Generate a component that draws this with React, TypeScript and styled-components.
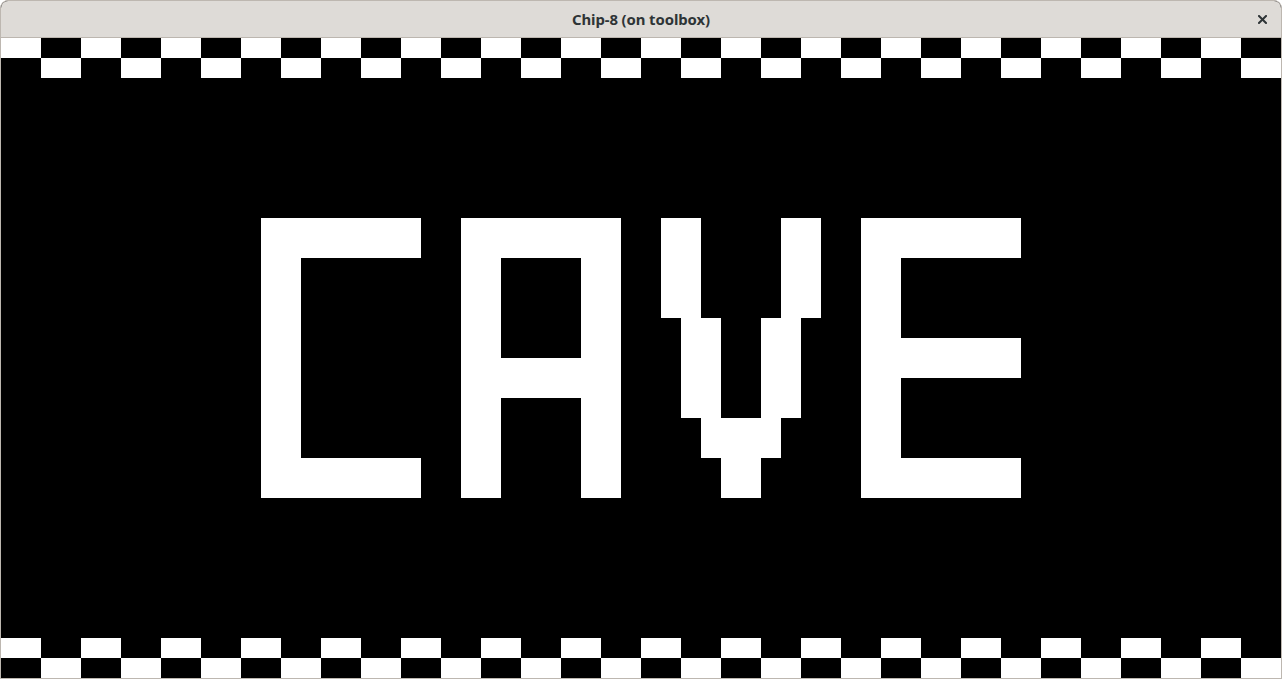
import React from "react";
import styled, { createGlobalStyle } from "styled-components";

const GlobalStyle = createGlobalStyle`
  html, body { margin: 0; padding: 0; background: #ffffff; }
  body { font-family: "Noto Sans", "DejaVu Sans", sans-serif; }
`;

const COLS = 64;
const ROWS = 32;
const SCALE = 20;

function buildScreen(): boolean[][] {
  const g: boolean[][] = Array.from({ length: ROWS }, () => Array(COLS).fill(false));
  const fill = (r0: number, r1: number, c0: number, c1: number) => {
    for (let r = r0; r <= r1; r++) for (let c = c0; c <= c1; c++) g[r][c] = true;
  };
  // checker borders
  for (let c = 0; c < COLS; c++) {
    const even = Math.floor(c / 2) % 2 === 0;
    g[0][c] = even;
    g[1][c] = !even;
    g[30][c] = even;
    g[31][c] = !even;
  }
  // C
  fill(9, 10, 13, 20);
  fill(11, 20, 13, 14);
  fill(21, 22, 13, 20);
  // A
  fill(9, 10, 23, 30);
  fill(11, 22, 23, 24);
  fill(11, 22, 29, 30);
  fill(16, 17, 23, 30);
  // V
  fill(9, 13, 33, 34);
  fill(9, 13, 39, 40);
  fill(14, 18, 34, 35);
  fill(14, 18, 38, 39);
  fill(19, 20, 35, 38);
  fill(21, 22, 36, 37);
  // E
  fill(9, 10, 43, 50);
  fill(11, 22, 43, 44);
  fill(15, 16, 43, 50);
  fill(21, 22, 43, 50);
  return g;
}

const screen = buildScreen();

const Window = styled.div`
  width: 1280px;
  height: 677px;
  border: 1px solid #bdb7b0;
  border-radius: 8px 8px 0 0;
  overflow: hidden;
  display: flex;
  flex-direction: column;
  background: #000;
`;

const TitleBar = styled.div`
  height: 36px;
  flex: 0 0 36px;
  background: #dedbd7;
  border-bottom: 1px solid #bcb6af;
  display: grid;
  grid-template-columns: 1fr auto 1fr;
  align-items: center;
`;

const Title = styled.div`
  grid-column: 2;
  font-family: "Noto Sans", "DejaVu Sans", sans-serif;
  font-weight: 700;
  font-size: 14.9px;
  color: #2e3436;
  letter-spacing: -0.1px;
  margin-top: -1px;
`;

const CloseButton = styled.button`
  grid-column: 3;
  justify-self: end;
  margin-right: 7px;
  width: 24px;
  height: 24px;
  border: none;
  background: transparent;
  padding: 0;
  display: flex;
  align-items: center;
  justify-content: center;
  color: #2e3436;
`;

const Display = styled.div`
  display: grid;
  grid-template-columns: repeat(${COLS}, ${SCALE}px);
  grid-template-rows: repeat(${ROWS}, ${SCALE}px);
  width: ${COLS * SCALE}px;
  height: ${ROWS * SCALE}px;
  background: #000;
`;

const Pixel = styled.div<{ $on: boolean }>`
  background: ${(p) => (p.$on ? "#ffffff" : "#000000")};
`;

export default function App() {
  return (
    <>
      <GlobalStyle />
      <Window>
        <TitleBar>
          <Title>Chip-8 (on toolbox)</Title>
          <CloseButton aria-label="Close">
            <svg width="9" height="9" viewBox="0 0 9 9">
              <path d="M1 1 L8 8 M8 1 L1 8" stroke="#2e3436" strokeWidth="2" strokeLinecap="square" />
            </svg>
          </CloseButton>
        </TitleBar>
        <Display>
          {screen.map((row, r) =>
            row.map((on, c) => <Pixel key={`${r}-${c}`} $on={on} />)
          )}
        </Display>
      </Window>
    </>
  );
}
